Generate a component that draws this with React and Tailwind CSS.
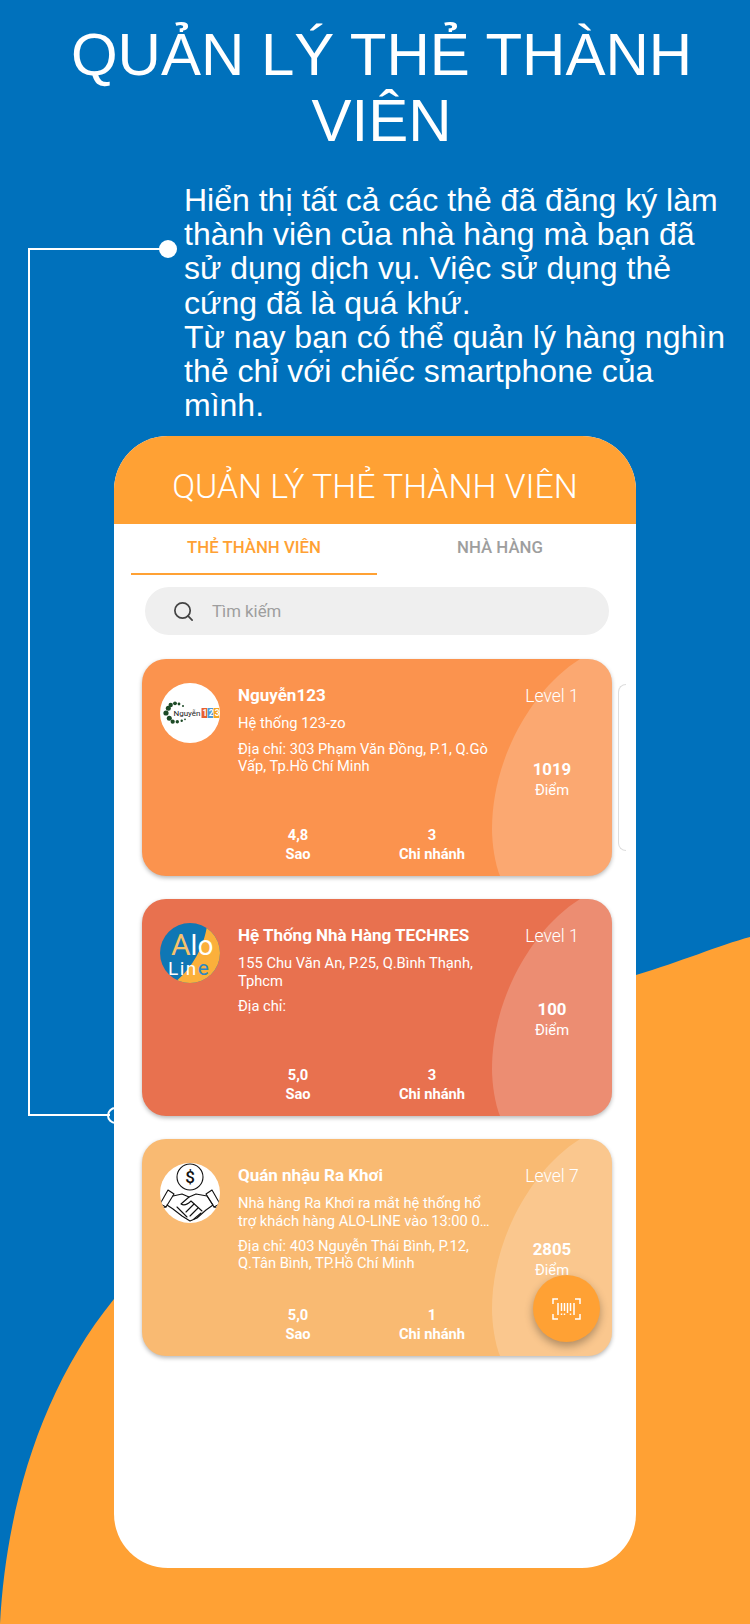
import React from "react";
import { Search } from "lucide-react";

function AvatarNguyen() {
  const dots = [
    [6, 30, 2.6], [8.3, 25.3, 2.5], [10.7, 22, 2.2], [15, 20.3, 1.9], [19, 21, 1.4], [23, 23, 1],
    [9.3, 35.3, 2.5], [12.7, 38.7, 2.1], [17.3, 38.7, 1.7], [21.7, 37.7, 1.2], [25, 36.3, 0.9],
  ];
  return (
    <svg viewBox="0 0 60 60" className="w-[60px] h-[60px] rounded-full bg-white">
      {dots.map(([x, y, r], i) => (
        <circle key={i} cx={x} cy={y} r={r} fill="#1d4a26" />
      ))}
      <text x="13.5" y="32.5" fontSize="8" fill="#222" fontFamily="Roboto, sans-serif">Nguyễn</text>
      <rect x="41.5" y="25" width="5.6" height="10" fill="#e8612f" />
      <rect x="47.5" y="25" width="5.6" height="10" fill="#4f9bd6" />
      <rect x="53.5" y="25" width="5.6" height="10" fill="#f5a623" />
      <text x="42.6" y="33" fontSize="8.5" letterSpacing="1.2" fill="#fff" fontWeight="700" fontFamily="Roboto, sans-serif">123</text>
    </svg>
  );
}

function AvatarAlo() {
  return (
    <svg viewBox="0 0 60 60" className="w-[60px] h-[60px] rounded-full">
      <rect width="60" height="60" fill="#0f77b5" />
      <path d="M47 3 C 44 22, 34 44, 14 60 L60 60 L60 3 Z" fill="#fbb03b" />
      <text x="11" y="32" fontSize="28" fill="#fff" fontFamily="Roboto, sans-serif" fontWeight="400">
        <tspan fill="#f7c26a" fontSize="30">A</tspan>
        <tspan>lo</tspan>
      </text>
      <text x="8" y="52" fontSize="19" letterSpacing="1.5" fill="#fff" fontFamily="Roboto, sans-serif" fontWeight="400">
        Lin
        <tspan fill="#2b87c4" fontSize="21">e</tspan>
      </text>
    </svg>
  );
}

function AvatarDeal() {
  return (
    <svg viewBox="0 0 60 60" className="w-[60px] h-[60px] rounded-full bg-white" fill="none" stroke="#111" strokeWidth="1.1" strokeLinejoin="round" strokeLinecap="round">
      <circle cx="30" cy="14" r="13" />
      <text x="30" y="20" fontSize="17" textAnchor="middle" fill="#111" stroke="none" fontFamily="Roboto, sans-serif" fontWeight="500">$</text>
      <path d="M8 27 L14 31 L6 44 L0 41 Z" />
      <path d="M52 27 L46 31 L54 44 L60 41 Z" />
      <path d="M0 45 L6 44 M60 45 L54 44" />
      <path d="M13 33 L22 31 L29 34 L36 31 L47 33 L53 42 L46 47 L37 55 L30 58 L22 53 L13 46 L7 42" />
      <path d="M29 34 L21 41 C 24 43, 28 41, 31 38 L42 48" />
      <path d="M38 45 L30 53 M34 41 L26 49 M17 44 L22 49 M22 49 L27 54 M41 50 L34 56" />
    </svg>
  );
}

function BarcodeIcon() {
  return (
    <svg viewBox="0 0 29 22" className="w-[29px] h-[22px]" fill="none" stroke="#fff" strokeWidth="1.5">
      <path d="M1 6V1H6M23 1H28V6M1 16V21H6M23 21H28V16" />
      <path d="M6 5V17M9.5 5V13M9.5 15.5V17M12.5 5V13M12.5 15.5V17M15.5 5V15M18.5 5V13M18.5 15.5V17M22 5V17" />
    </svg>
  );
}

function Card({ bg, avatar, name, sub, address, level, points, rating, branches }) {
  return (
    <div className={`relative h-[217px] rounded-[24px] overflow-hidden flex pl-[18px] pt-[24px] text-white shadow-[0_2px_4px_rgba(0,0,0,0.28)] ${bg}`}>
      <svg viewBox="0 0 470 217" className="absolute inset-0 w-full h-full">
        <path d="M438 0 C 390 30, 350 100, 350 170 C 350 185, 353 205, 358 217 L470 217 L470 0 Z" fill="rgba(255,255,255,0.2)" />
      </svg>
      <div className="relative shrink-0 w-[60px] h-[60px]">{avatar}</div>
      <div className="relative ml-[18px] w-[256px] shrink-0 flex flex-col pt-[3px] pb-[12px]">
        <div className="text-[17px] leading-[19px] font-bold">{name}</div>
        <div className="mt-[10px] text-[14.7px] leading-[17.5px]">{sub}</div>
        <div className="mt-[8px] text-[14.7px] leading-[17px]">{address}</div>
        <div className="mt-auto -ml-[7px] flex w-[268px] text-[14.7px] leading-[19px] font-bold text-center">
          <div className="w-[134px]">
            <div>{rating}</div>
            <div>Sao</div>
          </div>
          <div className="w-[134px]">
            <div>{branches}</div>
            <div>Chi nhánh</div>
          </div>
        </div>
      </div>
      <div className="relative ml-[18px] w-[80px] shrink-0 flex flex-col items-center pt-[4px]">
        <div className="text-[17.5px] leading-[19px] font-light">{level}</div>
        <div className="mt-[54px] text-[16.8px] leading-[19px] font-bold">{points}</div>
        <div className="mt-[3px] text-[14.7px] leading-[17px]">Điểm</div>
      </div>
    </div>
  );
}

export default function App() {
  return (
    <div className="relative w-[750px] h-[1624px] overflow-hidden bg-[#0071bc] font-['Liberation_Sans',Arial,sans-serif]">
      <svg viewBox="0 0 750 1624" className="absolute inset-0 w-full h-full">
        <path d="M0 1624 C 6 1510, 40 1390, 114 1299 C 250 1150, 450 1020, 636 975 C 680 962, 720 945, 750 937 L750 1624 Z" fill="#ffa134" />
      </svg>

      <div className="absolute left-[28px] top-[248px] w-[82px] h-[868px] border-l-2 border-t-2 border-b-2 border-white" />
      <div className="absolute left-[110px] top-[248px] w-[50px] h-[2px] bg-white" />
      <div className="absolute left-[159px] top-[240px] w-[18px] h-[18px] rounded-full bg-white" />
      <div className="absolute left-[107px] top-[1107px] w-[17px] h-[17px] rounded-full border-2 border-white" />

      <div className="relative pt-[22px]">
        <h1 className="pl-[13px] text-center text-white text-[60px] leading-[66px] font-normal">
          QUẢN LÝ THẺ THÀNH
          <br />
          VIÊN
        </h1>
        <p className="mt-[29px] ml-[184px] w-[560px] text-white text-[32px] leading-[34.2px] whitespace-nowrap">
          Hiển thị tất cả các thẻ đã đăng ký làm
          <br />
          thành viên của nhà hàng mà bạn đã
          <br />
          sử dụng dịch vụ. Việc sử dụng thẻ
          <br />
          cứng đã là quá khứ.
          <br />
          Từ nay bạn có thể quản lý hàng nghìn
          <br />
          thẻ chỉ với chiếc smartphone của
          <br />
          mình.
        </p>

        <div className="relative mt-[13.6px] ml-[114px] w-[522px] h-[1132px] rounded-[54px] overflow-hidden bg-white font-['Roboto',sans-serif]">
          <div className="h-[88px] bg-[#ffa134] flex items-center justify-center pt-[14px] text-white text-[33.8px] font-light">
            QUẢN LÝ THẺ THÀNH VIÊN
          </div>

          <div className="ml-[17px] mr-[13px] flex h-[51px] text-[16.8px] font-medium">
            <div className="flex-1 flex items-center justify-center pb-[1px] text-[#ffa134] border-b-2 border-[#ffa134]">
              THẺ THÀNH VIÊN
            </div>
            <div className="flex-1 flex items-center justify-center pb-[3px] text-[#9e9e9e]">NHÀ HÀNG</div>
          </div>

          <div className="ml-[31px] mr-[27px] mt-[12px] h-[48px] rounded-full bg-[#efefef] flex items-center pl-[27px]">
            <Search size={23} strokeWidth={1.8} className="text-[#444]" />
            <span className="ml-[17px] mt-[2px] text-[16.8px] text-[#9e9e9e]">Tìm kiếm</span>
          </div>

          <div className="mt-[24px] ml-[28px] w-[470px] flex flex-col gap-[23px]">
            <Card
              bg="bg-[#fb934e]"
              avatar={<AvatarNguyen />}
              name="Nguyễn123"
              sub="Hệ thống 123-zo"
              address="Địa chỉ: 303 Phạm Văn Đồng, P.1, Q.Gò Vấp, Tp.Hồ Chí Minh"
              level="Level 1"
              points="1019"
              rating="4,8"
              branches="3"
            />
            <Card
              bg="bg-[#e8714f]"
              avatar={<AvatarAlo />}
              name="Hệ Thống Nhà Hàng TECHRES"
              sub="155 Chu Văn An, P.25, Q.Bình Thạnh, Tphcm"
              address="Địa chỉ:"
              level="Level 1"
              points="100"
              rating="5,0"
              branches="3"
            />
            <Card
              bg="bg-[#f9ba72]"
              avatar={<AvatarDeal />}
              name="Quán nhậu Ra Khơi"
              sub="Nhà hàng Ra Khơi ra mắt hệ thống hổ trợ khách hàng ALO-LINE vào 13:00 0…"
              address="Địa chỉ: 403 Nguyễn Thái Bình, P.12, Q.Tân Bình, TP.Hồ Chí Minh"
              level="Level 7"
              points="2805"
              rating="5,0"
              branches="1"
            />
          </div>

          <div className="absolute left-[504px] top-[248px] w-[8px] h-[167px] rounded-l-[8px] border-l border-t border-b border-[#dddddd]" />

          <div className="absolute right-[36px] bottom-[226px] w-[67px] h-[67px] rounded-full bg-[#ffa134] flex items-center justify-center shadow-[0_4px_8px_rgba(0,0,0,0.3)]">
            <BarcodeIcon />
          </div>
        </div>
      </div>
    </div>
  );
}
